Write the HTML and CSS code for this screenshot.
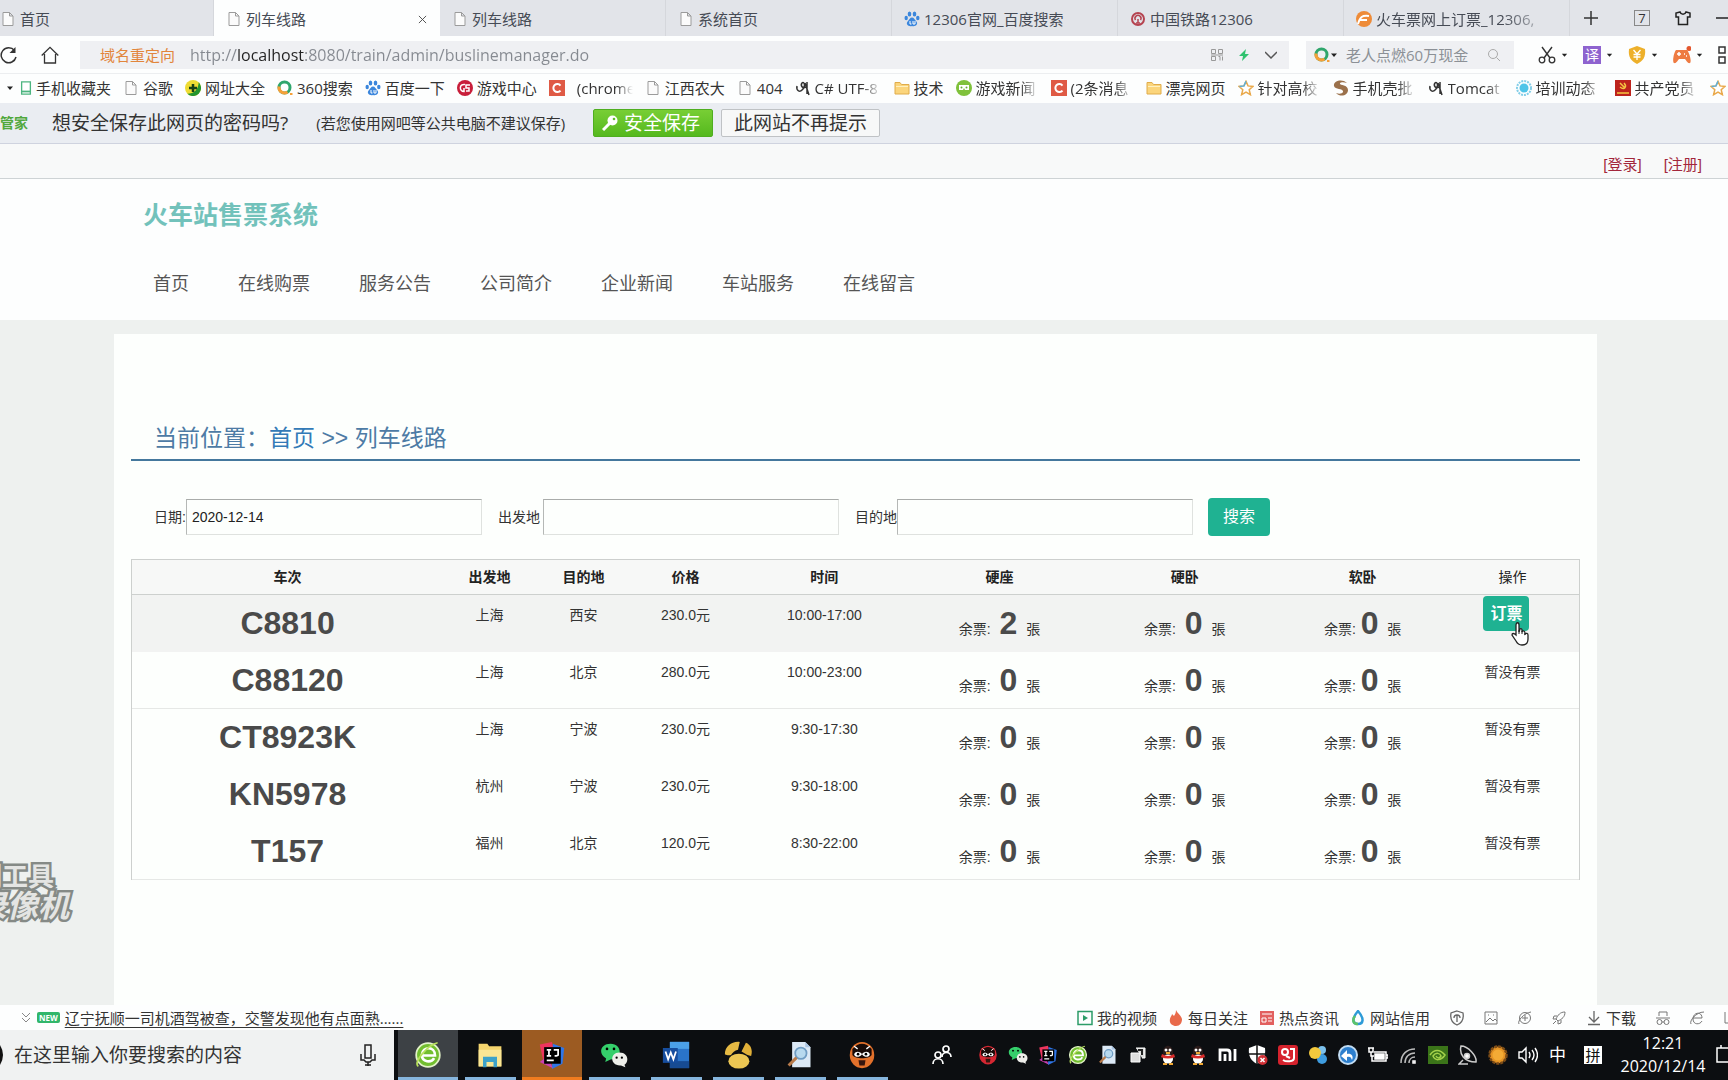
FILE: index.html
```html
<!DOCTYPE html>
<html lang="zh-CN">
<head>
<meta charset="utf-8">
<title>列车线路</title>
<meta name="viewport" content="width=device-width, initial-scale=1">
<link rel="stylesheet" href="styles.css">
</head>
<body>
<svg class="defs" aria-hidden="true">
  <symbol id="doc" viewBox="0 0 16 16"><path d="M3 1.5h6.5L13 5v9.500H3z M9.500 1.500V5H13" fill="#fbfbfb" stroke="#9b9b9b"/></symbol>
  <symbol id="folder" viewBox="0 0 16 16"><path d="M1 2.500h5l1.500 2H15v9.500H1z" fill="#fbd57c" stroke="#e0ac4b"/><path d="M2 6.500h12" stroke="#fff0c0"/></symbol>
  <symbol id="csdn" viewBox="0 0 16 16"><path fill="#df5a45" d="M0 0h16v16H0z"/><path d="M11.500 5.500a4 4 0 1 0 0 5" fill="none" stroke="#fff" stroke-width="2"/></symbol>
  <symbol id="star" viewBox="0 0 16 16"><path d="M8 1.300l2 4.600 5 .5-3.800 3.300 1.200 5L8 12.100l-4.400 2.600 1.200-5L1 6.400l5-.5z" fill="#fff" stroke="#e9a94b" stroke-width="1.500"/><path d="M1.500 6.400l4.500-.5 2-4.600" fill="none" stroke="#5bb0dd" stroke-width="1.500"/></symbol>
  <symbol id="paw" viewBox="0 0 16 16" fill="#3b86dc"><ellipse cx="5.500" cy="3" rx="1.800" ry="2.500"/><ellipse cx="10.500" cy="3" rx="1.800" ry="2.500"/><ellipse cx="2.200" cy="7" rx="1.700" ry="2.200"/><ellipse cx="13.800" cy="7" rx="1.700" ry="2.200"/><path d="M8 6.500c2 0 2.500 2 4 3.500 3 3-.5 6-4 5-3.500 1-7-2-4-5C5.500 8.500 6 6.500 8 6.500z"/><path d="M6 10v3h1.500M9 10v3h2v-3" fill="none" stroke="#fff"/></symbol>
  <symbol id="ring" viewBox="0 0 16 16"><circle cx="7.500" cy="7.500" r="5.500" fill="none" stroke="#2fa66c" stroke-width="3"/><path d="M2.100 6.500a5.500 5.500 0 0 0 8.400 5.600" fill="none" stroke="#f6a038" stroke-width="3"/><path d="M13 13h2.500v2H13z" fill="#f6a038"/></symbol>
  <symbol id="tomcat" viewBox="0 0 16 16"><path d="M2 6c-1 5 3 7 6 3 3-3 1-8-1-6-2 3 1 6 4 4M10 3l4 12M12 2v12" fill="none" stroke="#333" stroke-width="1.500"/></symbol>
  <symbol id="caret" viewBox="0 0 8 8"><path d="M1 2.500h6L4 6z" fill="#222"/></symbol>
  <symbol id="wechat" viewBox="0 0 32 32"><path d="M12 3c14 0 14 18 0 18l-6 3 1-4C-3 14 1 3 12 3z" fill="#35cf6b"/><path d="M22 13c11 0 11 11 6 14l1 3-5-2C11 29 11 13 22 13z" fill="#eeeeea"/><circle cx="8" cy="9" r="1.500"/><circle cx="16" cy="9" r="1.500"/><circle cx="19" cy="19" r="1.300"/><circle cx="25" cy="19" r="1.300"/></symbol>
  <symbol id="ie360" viewBox="0 0 32 32"><circle cx="16" cy="16" r="13.500" fill="#72be2f" stroke="#e3f2c9" stroke-width="2"/><path d="M9 16.500h15c0-11-14-10.500-15-1 0 9.500 11 9.500 14 4" fill="none" stroke="#fff" stroke-width="3"/><path d="M5 29C-2 24 17 4 27 2" fill="none" stroke="#b8e15b" stroke-width="2"/></symbol>
  <symbol id="idea" viewBox="0 0 32 32"><path d="M2 4l14-3 3 14L7 27z" fill="#ed355e"/><path d="M17 3l13 5-2 18-12 6z" fill="#2f76e8"/><path d="M2 24l9-7 6 14z" fill="#ca3fb1"/><path d="M7 7h19v19H7z"/><path d="M10 10h5M12.500 10v7M10 17h5M18 10h5v6q0 1-4 1M10 22h8" stroke="#fff" stroke-width="2" fill="none"/></symbol>
  <symbol id="finder" viewBox="0 0 32 32"><path d="M7 1h15l6 6v23H7z" fill="#dce9f6"/><path d="M22 1v6h6" fill="#a9c4e2"/><circle cx="17" cy="14" r="6.500" fill="#b7d9ef" stroke="#6f9cc3" stroke-width="2"/><path d="M12 19L3 28" stroke="#b87a4b" stroke-width="3.500"/></symbol>
  <symbol id="ocam" viewBox="0 0 32 32"><ellipse cx="16" cy="16" rx="14" ry="15" fill="currentColor"/><path d="M5 9c7-8 15-8 22 0v7c-3 5-19 5-22 0z" fill="#180b08"/><path d="M16 15c-3 4-8 4-9 0 2-4 7-3 9 0 2-3 7-4 9 0-1 4-6 4-9 0" fill="#fff"/><circle cx="11.500" cy="15" r="1.500"/><circle cx="20.500" cy="15" r="1.500"/><path d="M12 22h8l-1 6h-6z" fill="#35150e"/><path d="M7 6l4 3M25 6l-4 3" stroke="#fff" stroke-width="1.500"/></symbol>
  <symbol id="qq" viewBox="0 0 20 20"><path d="M5 9c-1-11 11-11 10 0l3 5-3-1c0 3-1 4-2 5H7c-1-1-2-2-2-5l-3 1z" fill="#2b1b1a"/><ellipse cx="10" cy="14" rx="5" ry="4.500" fill="#fff"/><circle cx="8" cy="5" r="1.500" fill="#fff"/><circle cx="12" cy="5" r="1.500" fill="#fff"/><path d="M4 9q6 4 12 0l1 3q-7 3-14 0z" fill="#d92b2a"/><path d="M5 19h4M11 19h4M8 8h4" stroke="#f1aa35" stroke-width="2"/></symbol>
</svg>

<header class="browser">
  <nav class="tabs" aria-label="标签页">
    <a class="tab" href="#"><svg class="ico"><use href="#doc"/></svg><span>首页</span></a>
    <a class="tab tab-active" href="#"><svg class="ico"><use href="#doc"/></svg><span>列车线路</span><button class="tab-close" type="button" aria-label="关闭"><svg viewBox="0 0 10 10"><path d="M1 1l8 8M9 1L1 9" stroke="#444"/></svg></button></a>
    <a class="tab" href="#"><svg class="ico"><use href="#doc"/></svg><span>列车线路</span></a>
    <a class="tab" href="#"><svg class="ico"><use href="#doc"/></svg><span>系统首页</span></a>
    <a class="tab" href="#"><svg class="ico"><use href="#paw"/></svg><span>12306官网_百度搜索</span></a>
    <a class="tab" href="#"><svg class="ico" viewBox="0 0 16 16"><circle cx="8" cy="8" r="6" fill="none" stroke="#b54350" stroke-width="2"/><path d="M6 12h4M8 12V8M5.500 9a3 3 0 1 1 5 0" fill="none" stroke="#b54350" stroke-width="1.500"/></svg><span>中国铁路12306</span></a>
    <a class="tab" href="#"><svg class="ico" viewBox="0 0 16 16"><circle cx="8" cy="8" r="8" fill="#ee8b38"/><path d="M2 13c2-7 4-9 11-8M4 9h7" fill="none" stroke="#fff" stroke-width="2"/></svg><span class="tail">火车票网上订票_12306,</span></a>
    <div class="window-tools">
      <button type="button" aria-label="新标签"><svg class="ico" viewBox="0 0 16 16"><path d="M8 1v14M1 8h14" stroke="#333" stroke-width="1.500"/></svg></button>
      <button type="button" class="count">7</button>
      <button type="button" aria-label="皮肤"><svg class="ico" viewBox="0 0 16 16"><path d="M5 2L1 3v4h2.500v7.500h9V7H15V3l-4-1c-1 3-5 3-6 0z" fill="none" stroke="#222" stroke-width="1.500"/></svg></button>
      <button type="button" aria-label="最小化"><svg class="ico" viewBox="0 0 16 16"><path d="M0 8h16" stroke="#222" stroke-width="1.500"/></svg></button>
    </div>
  </nav>

  <div class="address-row">
    <button type="button" aria-label="刷新"><svg class="ico-l" viewBox="0 0 18 18"><path d="M14.500 4.500A7.500 7.500 0 1 0 16 11" fill="none" stroke="#333" stroke-width="1.500"/><path d="M15.500 1v6h-6z" fill="#333"/></svg></button>
    <button type="button" aria-label="主页"><svg class="ico-l" viewBox="0 0 18 18"><path d="M.7 9.500L9 1.300l8.300 8.200M3.500 8v9h11V8" fill="none" stroke="#333" stroke-width="1.300"/></svg></button>
    <div class="address">
      <label for="url">域名重定向</label>
      <input id="url" type="text" value="http://localhost:8080/train/admin/buslinemanager.do">
      <svg class="ico-s" viewBox="0 0 12 12"><path d="M.5.500h4v4h-4zM7.500.500h4v4h-4zM.5 7.500h4v4h-4zM7.500 7.500h1.500v4M11.500 7.500v4M0 6h12" fill="none" stroke="#999"/></svg>
      <svg class="ico-s" viewBox="0 0 12 12"><path d="M8 0L1 7h4l-1 5 7-7H7z" fill="#2fc26e"/></svg>
      <svg class="ico-s" viewBox="0 0 12 12"><path d="M0 3l6 6 6-6" fill="none" stroke="#555" stroke-width="1.500"/></svg>
    </div>
    <div class="quick">
      <svg class="ico"><use href="#ring"/></svg><svg class="caret"><use href="#caret"/></svg>
      <input type="search" aria-label="搜索" placeholder="老人点燃60万现金">
      <svg class="ico-s" viewBox="0 0 12 12"><circle cx="5" cy="5" r="4.500" fill="none" stroke="#aaa"/><path d="M8.500 8.500L12 12" stroke="#aaa"/></svg>
    </div>
    <div class="addons">
      <button type="button" aria-label="截图"><svg class="ico-l" viewBox="0 0 18 18"><path d="M4 1l8 11M14 1L6 12" stroke="#333" stroke-width="1.400"/><circle cx="4" cy="14" r="2.800" fill="none" stroke="#333" stroke-width="1.300"/><circle cx="14" cy="14" r="2.800" fill="none" stroke="#333" stroke-width="1.300"/></svg><svg class="caret"><use href="#caret"/></svg></button>
      <button type="button"><span class="translate">译</span><svg class="caret"><use href="#caret"/></svg></button>
      <button type="button" aria-label="钱盾"><svg class="ico-l" viewBox="0 0 18 18"><path d="M9 0l8 3c1 8-2 12-8 15C3 15 0 11 1 3z" fill="#edb02b"/><path d="M5.500 4L9 8l3.500-4M9 8v6M5.500 8.500h7M5.500 11h7" fill="none" stroke="#fff" stroke-width="1.300"/></svg><svg class="caret"><use href="#caret"/></svg></button>
      <button type="button" aria-label="游戏"><svg class="ico-l" viewBox="0 0 18 18"><path d="M3 4h11c2 2 5 11 3 13-2 1-4-3-5-4H6c-1 1-3 5-5 4S1 6 3 4z" fill="#ee7b42"/><circle cx="16" cy="2.500" r="2.500" fill="#e4572e"/><path d="M4 8h4M6 6v4M11 8h1M13 10h1" stroke="#fff" stroke-width="1.500"/></svg><svg class="caret"><use href="#caret"/></svg></button>
      <button type="button" aria-label="更多"><svg class="ico-l" viewBox="0 0 18 18"><path d="M1 1h6v6H1zM11 1h6v6h-6zM1 11h6v6H1zM11 11h6v6h-6z" fill="none" stroke="#333" stroke-width="1.500"/></svg></button>
    </div>
  </div>

  <nav class="bookmarks" aria-label="收藏夹">
    <svg class="caret"><use href="#caret"/></svg>
    <a href="#"><svg class="ico-s" viewBox="0 0 12 16"><path d="M1 1h10v14H1z" fill="#fff" stroke="#4db580" stroke-width="1.500"/><path d="M1 12h10" stroke="#4db580" stroke-width="2"/></svg><span>手机收藏夹</span></a>
    <a href="#"><svg class="ico"><use href="#doc"/></svg><span>谷歌</span></a>
    <a href="#"><svg class="ico" viewBox="0 0 16 16"><circle cx="8" cy="8" r="8" fill="#eedb33"/><path d="M13.700 2.300A8 8 0 0 1 2.300 13.700c7 0 11-4 11.400-11.400z" fill="#23942f"/><path d="M8 4v8M4 8h8" stroke="#173f16" stroke-width="2.500"/></svg><span>网址大全</span></a>
    <a href="#"><svg class="ico"><use href="#ring"/></svg><span>360搜索</span></a>
    <a href="#"><svg class="ico"><use href="#paw"/></svg><span>百度一下</span></a>
    <a href="#"><svg class="ico" viewBox="0 0 16 16"><circle cx="8" cy="8" r="8" fill="#c81e3a"/><path d="M8 4.500c-6-1-6 7-1 7V8M13 5H9v3h3v3H9" fill="none" stroke="#fff" stroke-width="1.500"/></svg><span>游戏中心</span></a>
    <a href="#" class="wide"><svg class="ico"><use href="#csdn"/></svg><span class="fade short">(chrome</span></a>
    <a href="#"><svg class="ico"><use href="#doc"/></svg><span>江西农大</span></a>
    <a href="#"><svg class="ico"><use href="#doc"/></svg><span>404</span></a>
    <a href="#"><svg class="ico"><use href="#tomcat"/></svg><span class="fade long">C# UTF-8</span></a>
    <a href="#"><svg class="ico"><use href="#folder"/></svg><span>技术</span></a>
    <a href="#"><svg class="ico" viewBox="0 0 16 16"><circle cx="8" cy="8" r="8" fill="#7fc13b"/><path d="M3 5h10v5H9l-1-2-1 2H3z" fill="#fff"/><circle cx="5.500" cy="7.500" r="1" fill="#6a3"/><circle cx="10.500" cy="7.500" r="1" fill="#6a3"/></svg><span class="fade">游戏新闻</span></a>
    <a href="#"><svg class="ico"><use href="#csdn"/></svg><span class="fade">(2条消息</span></a>
    <a href="#"><svg class="ico"><use href="#folder"/></svg><span>漂亮网页</span></a>
    <a href="#"><svg class="ico"><use href="#star"/></svg><span class="fade">针对高校</span></a>
    <a href="#"><svg class="ico" viewBox="0 0 16 16"><path d="M14 3C9-2 0 1 1 6c1 4 10 2 9 6-1 2-4 2-7 1 5 5 12 2 12-3 0-6-9-4-8-7 1-1 4-1 7 0z" fill="#9b714b"/></svg><span class="fade">手机壳批</span></a>
    <a href="#"><svg class="ico"><use href="#tomcat"/></svg><span class="fade short">Tomcat</span></a>
    <a href="#"><svg class="ico" viewBox="0 0 16 16"><circle cx="8" cy="8" r="7" fill="none" stroke="#83cee8" stroke-width="2" stroke-dasharray="2 1"/><circle cx="8" cy="8" r="4.500" fill="#4fc4e8"/></svg><span class="fade long">培训动态</span></a>
    <a href="#"><svg class="ico" viewBox="0 0 16 16"><path d="M0 0h16v16H0z" fill="#bd241d"/><path d="M5 7c5 4 7-1 4-4M5 3l5 5M2 13h12" fill="none" stroke="#f5c642" stroke-width="1.500"/></svg><span class="fade">共产党员</span></a>
    <a href="#"><svg class="ico"><use href="#star"/></svg><span>大</span></a>
  </nav>

  <div class="save-bar">
    <strong>管家</strong>
    <span class="ask">想安全保存此网页的密码吗?</span>
    <span class="note">(若您使用网吧等公共电脑不建议保存)</span>
    <button type="button" class="btn-save"><svg class="ico" viewBox="0 0 16 16"><circle cx="10.500" cy="5.500" r="5" fill="#fff"/><path d="M8 8l-7 7" stroke="#fff" stroke-width="3"/><circle cx="12" cy="4" r="1.300" fill="#60bd2a"/></svg>安全保存</button>
    <button type="button" class="btn-never">此网站不再提示</button>
  </div>
</header>

<div class="page">
  <div class="account"><a href="#">[登录]</a><a href="#">[注册]</a></div>
  <div class="site-head">
    <h1>火车站售票系统</h1>
    <nav class="menu"><a href="#">首页</a><a href="#">在线购票</a><a href="#">服务公告</a><a href="#">公司简介</a><a href="#">企业新闻</a><a href="#">车站服务</a><a href="#">在线留言</a></nav>
  </div>

  <main class="card">
    <h2>当前位置：<a href="#">首页</a> &gt;&gt; 列车线路</h2>
    <form class="filter">
      <label for="date">日期:</label><input id="date" type="text" value="2020-12-14">
      <label for="from">出发地</label><input id="from" type="text">
      <label for="to">目的地</label><input id="to" type="text">
      <button type="button" class="btn">搜索</button>
    </form>
    <table class="lines">
      <colgroup><col class="c-no"><col class="c-from"><col class="c-to"><col class="c-price"><col class="c-time"><col class="c-seat"><col class="c-hard"><col class="c-soft"><col class="c-act"></colgroup>
      <thead><tr><th>车次</th><th>出发地</th><th>目的地</th><th>价格</th><th>时间</th><th>硬座</th><th>硬卧</th><th>软卧</th><th class="plain">操作</th></tr></thead>
      <tbody>
        <tr class="hover"><td><b>C8810</b></td><td>上海</td><td>西安</td><td>230.0元</td><td>10:00-17:00</td><td class="left">余票: <b>2</b> 張</td><td class="left">余票: <b>0</b> 張</td><td class="left tight">余票: <b>0</b> 張</td><td class="act"><div class="order"><button type="button" class="btn btn-order">订票</button><svg class="hand" viewBox="0 0 18 24"><path d="M5 13V3c0-3 3-3 3 0v7l1-3c1-1 2 0 2 1v2c1-2 3-1 3 1v1c1-1 3-1 3 1v4c0 4-2 6-6 6-3 0-5-2-6-4l-4-6c0-2 2-2 4 0z" fill="#fff" stroke="#222" stroke-width="1.300"/><path d="M8 8v4M11 9v3M14 11v2" stroke="#222"/></svg></div></td></tr>
        <tr class="ruled"><td><b>C88120</b></td><td>上海</td><td>北京</td><td>280.0元</td><td>10:00-23:00</td><td class="left">余票: <b>0</b> 張</td><td class="left">余票: <b>0</b> 張</td><td class="left tight">余票: <b>0</b> 張</td><td>暂没有票</td></tr>
        <tr><td><b>CT8923K</b></td><td>上海</td><td>宁波</td><td>230.0元</td><td>9:30-17:30</td><td class="left">余票: <b>0</b> 張</td><td class="left">余票: <b>0</b> 張</td><td class="left tight">余票: <b>0</b> 張</td><td>暂没有票</td></tr>
        <tr><td><b>KN5978</b></td><td>杭州</td><td>宁波</td><td>230.0元</td><td>9:30-18:00</td><td class="left">余票: <b>0</b> 張</td><td class="left">余票: <b>0</b> 張</td><td class="left tight">余票: <b>0</b> 張</td><td>暂没有票</td></tr>
        <tr class="ruled"><td><b>T157</b></td><td>福州</td><td>北京</td><td>120.0元</td><td>8:30-22:00</td><td class="left">余票: <b>0</b> 張</td><td class="left">余票: <b>0</b> 張</td><td class="left tight">余票: <b>0</b> 張</td><td>暂没有票</td></tr>
      </tbody>
    </table>
  </main>
  <div class="watermark"><span>制工具</span><span class="big">录像机</span></div>
</div>

<footer>
  <div class="status">
    <svg class="ico-s" viewBox="0 0 12 12"><path d="M2 1l4 4 4-4M2 6l4 4 4-4" fill="none" stroke="#888"/></svg>
    <span class="new">NEW</span>
    <a class="news" href="#">辽宁抚顺一司机酒驾被查，交警发现他有点面熟......</a>
    <div class="links">
      <a href="#"><svg class="ico" viewBox="0 0 16 16"><path d="M1 1.500h14v13H1z" fill="none" stroke="#2c9c68" stroke-width="1.500"/><path d="M6 5v6l5-3z" fill="#2c9c68"/></svg>我的视频</a>
      <a href="#"><svg class="ico" viewBox="0 0 16 16"><path d="M8 0c1 3 5 5 6 9 0 4-2 7-6 7s-7-3-6-7c0-2 2-3 2-5l2 2c1-2 2-3 2-6z" fill="#e96a4b"/></svg>每日关注</a>
      <a href="#"><svg class="ico" viewBox="0 0 16 16"><path d="M1 1h14v14H1z" fill="#e2605f"/><path d="M3 4h10M3 8h4v4H3zM9 8h4M9 11h4" fill="none" stroke="#fff"/></svg>热点资讯</a>
      <a href="#"><svg class="ico" viewBox="0 0 16 16"><path d="M8 1c7 8 5 13 0 13S1 9 8 1z" fill="none" stroke="#2d9bd8" stroke-width="2.500"/><path d="M8 14c-5 0-6-4-3-8" fill="none" stroke="#5cc36a" stroke-width="2.500"/></svg>网站信用</a>
    </div>
    <div class="tools">
      <svg class="ico" viewBox="0 0 16 16"><path d="M8 1l6 2c1 6-1 10-6 12C3 13 1 9 2 3zM8 5v7M5 8c0-4 6-4 6 0" fill="none" stroke="#666" stroke-width="1.300"/></svg>
      <svg class="ico" viewBox="0 0 16 16"><path d="M2 2h12v12H2zM3 12l4-4 3 3 2-2 2 2M5 5h1M10 5h1" fill="none" stroke="#777"/></svg>
      <svg class="ico" viewBox="0 0 16 16"><circle cx="8" cy="8" r="5.500" fill="none" stroke="#777"/><path d="M8 5v6M5 8h6M2 14c-2-3 5-11 12-12" fill="none" stroke="#777"/></svg>
      <svg class="ico" viewBox="0 0 16 16"><path d="M14 2c-5 0-7 3-9 7l2 2c4-2 7-4 7-9zM6 6L3 6l-1 3h3M10 10v3l-3 1v-3M5 11l-3 3" fill="none" stroke="#777"/></svg>
    </div>
    <a class="download" href="#"><svg class="ico" viewBox="0 0 16 16"><path d="M8 1v10M3 7l5 5 5-5M2 14.500h12" fill="none" stroke="#666" stroke-width="1.300"/></svg>下载</a>
    <div class="tools">
      <svg class="ico" viewBox="0 0 16 16"><path d="M4 6V2h8v4M1 8h14M7 12h2" fill="none" stroke="#777"/><circle cx="4.500" cy="12" r="2.500" fill="none" stroke="#777"/><circle cx="11.500" cy="12" r="2.500" fill="none" stroke="#777"/></svg>
      <svg class="ico" viewBox="0 0 16 16"><path d="M4 8h9c0-7-9-6-9 1 0 6 7 6 9 2M2 14C0 11 7 2 15 2" fill="none" stroke="#777"/></svg>
      <svg class="ico" viewBox="0 0 16 16"><path d="M2 2v11h12" fill="none" stroke="#777"/></svg>
    </div>
  </div>

  <div class="taskbar">
    <div class="task-search"><svg viewBox="0 0 4 24"><path d="M0 2q6 10 0 20" fill="#111"/></svg><input type="search" aria-label="搜索" placeholder="在这里输入你要搜索的内容"><svg class="mic" viewBox="0 0 16 22"><path d="M5 1h6v13H5zM1 10v6h3l2 2h4l2-2h3v-6M8 18v4M5 21h6" fill="none" stroke="#222" stroke-width="1.500"/></svg></div>
    <div class="apps">
      <button type="button" class="on" aria-label="浏览器"><svg viewBox="0 0 32 32"><use href="#ie360"/></svg></button>
      <button type="button" aria-label="文件"><svg viewBox="0 0 32 32"><path d="M3 3h10l2 3h14v23H3z" fill="#f5d56e"/><path d="M3 10h26v19H3z" fill="#fbe694"/><path d="M8 18h16v12h-4v-6h-8v6H8z" fill="#3ea2c9"/></svg></button>
      <button type="button" class="hot" aria-label="IDEA"><svg viewBox="0 0 32 32"><use href="#idea"/></svg></button>
      <button type="button" aria-label="微信"><svg viewBox="0 0 32 32"><use href="#wechat"/></svg></button>
      <button type="button" aria-label="Word"><svg viewBox="0 0 32 32"><path d="M9 1h22v30H9z" fill="#2a74c9"/><path d="M9 1h22v8H9z" fill="#4ba0e8"/><path d="M9 23h22v8H9z" fill="#174b93"/><path d="M1 8h17v17H1z" fill="#164d9e"/><path d="M4 12l3 9 3-8 3 8 3-9" fill="none" stroke="#fff" stroke-width="2"/></svg></button>
      <button type="button" aria-label="Navicat"><svg viewBox="0 0 32 32"><ellipse cx="17" cy="23" rx="12" ry="8.500" fill="#ecc653"/><path d="M1 15C1 6 9 0 18 1l-2 9c-4 1-6 3-8 6-3 1-5 0-7-1z" fill="#e6b943"/><path d="M20 12l5-10c6 2 8 9 6 15-3 0-6-2-11-5z" fill="#e0af38"/></svg></button>
      <button type="button" aria-label="查找"><svg viewBox="0 0 32 32"><use href="#finder"/></svg></button>
      <button type="button" class="orange" aria-label="录屏"><svg viewBox="0 0 32 32"><use href="#ocam"/></svg></button>
    </div>
    <div class="people"><svg viewBox="0 0 20 20" fill="none" stroke="#fff" stroke-width="1.700"><circle cx="14" cy="4" r="3"/><path d="M10 12c0-6 9-6 9 0"/><circle cx="6" cy="10" r="3"/><path d="M1 19c0-7 10-7 10 0"/></svg></div>
    <div class="tray">
      <svg class="red" viewBox="0 0 32 32"><use href="#ocam"/></svg>
      <svg><use href="#wechat"/></svg>
      <svg><use href="#idea"/></svg>
      <svg><use href="#ie360"/></svg>
      <svg><use href="#finder"/></svg>
      <svg viewBox="0 0 20 20"><path d="M3 8h9v9H3zM8 3h9v10h-3" fill="#ddd" stroke="#fff"/><path d="M10 5h4v5" fill="none" stroke="#222" stroke-width="2"/></svg>
      <svg><use href="#qq"/></svg>
      <svg><use href="#qq"/></svg>
      <svg viewBox="0 0 20 20"><path d="M2 16V5h7q3 0 3 3v8M7 9v7M17 4v12" fill="none" stroke="#fff" stroke-width="2.800"/></svg>
      <svg viewBox="0 0 20 20"><path d="M9 0l8 3c1 8-2 13-8 16C3 16 0 11 1 3z" fill="#fff"/><path d="M9 0v19M1 9h16" stroke="#111" stroke-width="1.500"/><circle cx="14.500" cy="15" r="5" fill="#d12f35"/><path d="M12.500 13l4 4m0-4l-4 4" stroke="#fff" stroke-width="1.500"/></svg>
      <svg viewBox="0 0 20 20"><rect width="20" height="20" rx="3" fill="#d5222d"/><circle cx="7" cy="7" r="3" fill="none" stroke="#fff" stroke-width="2"/><path d="M12 4h4v9c0 4-8 4-11 2M8 11l4 2" fill="none" stroke="#fff" stroke-width="2"/></svg>
      <svg viewBox="0 0 20 20"><circle cx="14" cy="14" r="5" fill="#3e9ce0"/><circle cx="14" cy="5" r="4" fill="#7cc1ed"/><circle cx="7" cy="8" r="6" fill="#f3c93d"/></svg>
      <svg viewBox="0 0 20 20"><circle cx="10" cy="10" r="9" fill="#2d7fce" stroke="#c2dcf2" stroke-width="2"/><path d="M14 15c2-4-1-7-5-6V5L3 11l6 5v-4c3-1 4 0 5 3z" fill="#fff"/></svg>
      <svg viewBox="0 0 20 20" fill="none" stroke="#fff" stroke-width="1.500"><path d="M6 7h12v9H4v-5M18 10h2v3h-2M1 3v4h4V3M3 7v4h3M0 3h6"/><path d="M7 9h9v5H7z" fill="#fff"/></svg>
      <svg viewBox="0 0 20 20" fill="none" stroke="#bbb" stroke-width="1.500"><path d="M3 18C3 9 9 4 17 4M7 18c0-6 4-10 10-10M11 18c0-3 2-6 6-6"/><path d="M15 16h2v2h-2z" stroke="#fff"/></svg>
      <svg viewBox="0 0 20 20"><path d="M0 1h20v18H0z" fill="#3b7419"/><path d="M2 10c4-6 10-6 15 0-4 6-10 6-12 1 3-4 7-3 8 0-2 3-4 2-5 0" fill="none" stroke="#a5d24b" stroke-width="1.500"/></svg>
      <svg viewBox="0 0 20 20" fill="none" stroke="#ccc" stroke-width="1.500"><path d="M3 1c-2 8 3 16 15 16C19 11 10 1 3 1zM5 15l-4 4h9"/><circle cx="9" cy="11" r="2.500" fill="#fff"/></svg>
      <svg viewBox="0 0 20 20"><circle cx="10" cy="10" r="8.500" fill="#e49324" stroke="#7d4c17" stroke-width="2.500" stroke-dasharray="3 1"/><circle cx="10" cy="10" r="5.500" fill="#f3ab35"/></svg>
      <svg viewBox="0 0 20 20" fill="none" stroke="#fff" stroke-width="1.400"><path d="M1 7h3l4-4v14l-4-4H1zM11 7q2 3 0 6M14 5q4 5 0 10M17 3q5 7 0 14"/></svg>
    </div>
    <span class="ime">中</span>
    <span class="pinyin">拼</span>
    <div class="clock"><span>12:21</span><span>2020/12/14</span></div>
    <svg class="notice" viewBox="0 0 20 20"><path d="M2 3h16v14H2zM6 3V0" fill="none" stroke="#fff" stroke-width="1.500"/></svg>
  </div>
</footer>
</body>
</html>
```
FILE: styles.css
```css
* { box-sizing: border-box; }

body {
  margin: 0;
  min-height: 100vh;
  display: flex;
  flex-direction: column;
  overflow: hidden;
  background: #eef1ef;
  color: #333;
  font: 15px/20px "Open Sans", "Noto Sans CJK SC", sans-serif;
}

a { color: inherit; text-decoration: none; }
button { font: inherit; border: 0; padding: 0; background: none; color: inherit; display: flex; align-items: center; }
input { font: inherit; color: inherit; border: 0; padding: 0; background: none; min-width: 0; outline: 0; }
svg { flex: none; display: block; }
.defs { position: absolute; width: 0; height: 0; }
.ico { width: 16px; height: 16px; }
.ico-s { width: 12px; height: 14px; }
.ico-l { width: 18px; height: 18px; }
.caret { width: 8px; height: 8px; }
.fade, .tail { -webkit-mask-image: linear-gradient(to right, #000 70%, transparent); mask-image: linear-gradient(to right, #000 70%, transparent); }

/* tab strip */
.tabs { display: flex; height: 36px; margin-left: -12px; background: #e2e4e9; overflow: hidden; }
.tab { display: flex; flex: none; align-items: center; gap: 4px; width: 226px; padding: 2px 12px 0; border-right: 1px solid #d5d7dc; color: #464b55; white-space: nowrap; }
.tab span { flex: 1; }
.tab-active { background: #fdfefe; border-color: #fdfefe; }
.tab-close svg { width: 9px; height: 9px; }
.window-tools { display: flex; flex: none; align-items: center; gap: 25px; padding-left: 13px; }
.count { width: 16px; height: 16px; margin-left: 10px; justify-content: center; border: 1px solid #888; font-size: 13px; line-height: 14px; }

/* address bar */
.address-row { display: flex; align-items: center; height: 38px; background: #fdfefe; border-bottom: 1px solid #eceef0; overflow: hidden; }
.address-row > button + button { margin-left: 23px; }
.address { display: flex; flex: 1; align-items: center; gap: 15px; height: 28px; margin-left: 21px; padding: 0 12px 0 20px; background: #eff0f3; }
.address label { color: #e2853b; }
.address input {
  flex: 1;
  font-size: 16px;
  color: transparent;
  background: linear-gradient(to right, #858990 47px, #222 47px, #222 114px, #858990 114px);
  -webkit-background-clip: text;
  background-clip: text;
}
.quick { display: flex; align-items: center; width: 208px; height: 28px; margin: 0 24px 0 17px; padding: 0 14px 0 8px; background: #eff0f3; }
.quick input { flex: 1; margin-left: 8px; }
.quick input::placeholder { color: #8c9096; opacity: 1; }
.addons { display: flex; flex: none; gap: 15px; width: 190px; }
.addons button { gap: 5px; }
.addons .caret { width: 7px; }
.translate { width: 18px; height: 18px; background: #8e63cf; color: #fff; font-size: 14px; line-height: 18px; text-align: center; }

/* bookmarks */
.bookmarks { display: flex; align-items: center; gap: 12px; height: 29px; padding: 0 0 2px 6px; background: #fdfefe; overflow: hidden; }
.bookmarks a { display: flex; flex: none; align-items: center; gap: 4px; }
.bookmarks .caret { margin-right: -6px; }
.bookmarks span { overflow: hidden; white-space: nowrap; }
.bookmarks .fade { width: 63px; }
.bookmarks .long { width: 67px; }
.bookmarks .short { width: 56px; }
.bookmarks .wide { gap: 12px; }

/* password prompt */
.save-bar { display: flex; align-items: center; height: 41px; background: #eaedf2; border-bottom: 1px solid #cfd3df; font-size: 19px; white-space: nowrap; }
.save-bar strong { color: #51a83d; font-size: 14px; }
.ask { margin-left: 24px; }
.note { margin-left: 28px; font-size: 15px; }
.btn-save { gap: 6px; height: 28px; margin-left: 28px; padding: 0 12px 0 8px; border-radius: 2px; border: 1px solid #4fae20; background: linear-gradient(#78ce35, #55b91e); color: #fff; }
.btn-never { height: 28px; margin-left: 8px; padding: 0 12px; border: 1px solid #bfc2c5; border-radius: 2px; background: #f7f8f8; }

/* site */
.page { position: relative; flex: 1; display: flex; flex-direction: column; font-family: "Liberation Sans", "Noto Sans CJK SC", sans-serif; }
.account { display: flex; justify-content: flex-end; gap: 22px; height: 35px; padding: 10px 26px 0 0; background: #f8f9f9; border-bottom: 1px solid #ced3d5; color: #a3263b; font-size: 15px; line-height: 22px; }
.site-head { padding: 20px 143px 0; height: 141px; background: #fdfefe; }
.site-head h1 { margin: 0; color: #72c2bb; font-size: 25px; line-height: 32px; }
.menu { display: flex; gap: 49px; padding: 41px 10px 0; color: #555; font-size: 18px; line-height: 24px; }
.card { flex: 1; margin: 14px 131px 0 114px; padding: 87px 17px 0; background: #fdfffd; }
.card h2 { margin: 0; padding: 0 23px 4px; border-bottom: 2px solid #44789d; color: #4d7ba5; font-size: 23px; font-weight: 400; line-height: 34px; }
.card h2 a { color: #337ab7; }
.filter { display: flex; align-items: center; padding: 37px 0 0 23px; font-size: 14px; }
.filter input { width: 296px; height: 36px; padding: 0 5px; border: 1px solid; border-color: #a9acaa #dfe2df #dfe2df #b5b8b6; color: #222; }
.filter input + label { margin-left: 16px; }
.filter label[for="from"] { margin-right: 3px; }
.btn { justify-content: center; border-radius: 4px; background: #1fb292; color: #fff; font-size: 16px; }
.filter .btn { width: 62px; height: 38px; margin-left: 15px; }

.lines { width: 100%; margin-top: 23px; table-layout: fixed; border-collapse: separate; border-spacing: 0; border: 1px solid #cdd0ce; border-bottom: 0; font-size: 14px; line-height: 20px; text-align: center; }
.c-no { width: 21.5%; }
.c-from { width: 6.4%; }
.c-to { width: 6.6%; }
.c-price { width: 7.5%; }
.c-time { width: 11.7%; }
.c-seat { width: 12.5%; }
.c-hard { width: 13.1%; }
.c-soft { width: 11.5%; }
.c-act { width: 9.2%; }
.lines th { height: 35px; padding: 0; background: #f7f8f7; border-bottom: 1px solid #cdd0ce; font-weight: 700; color: #222; }
.lines .plain { font-weight: 400; }
.lines td { height: 57px; padding: 10px 0 0; vertical-align: top; }
.lines b { font-size: 32px; line-height: 36px; color: #4a4a4a; }
.left { white-space: nowrap; }
.left b { margin: 0 5px; }
.tight b { margin-left: 1px; }
.hover td { background: #f2f3f2; }
.lines .act { padding-top: 1px; }
.ruled td { border-bottom: 1px solid #e6e8e6; }
.order { position: relative; width: 58px; margin: 0 auto; }
.btn-order { width: 46px; height: 35px; font-weight: 700; }
.hand { position: absolute; left: 28px; top: 26px; width: 18px; height: 24px; }

/* recorder overlay */
.watermark { position: absolute; left: -24px; bottom: 82px; color: #e4e5e3; font-size: 26px; line-height: 28px; font-weight: 700; -webkit-text-stroke: 5px #858a86; paint-order: stroke fill; }
.watermark span { display: block; }
.watermark .big { font-size: 31px; line-height: 32px; font-style: italic; }

/* browser status bar */
.status { display: flex; align-items: center; height: 25px; padding-left: 20px; background: #fdfefe; white-space: nowrap; overflow: hidden; }
.status a { display: flex; align-items: center; gap: 4px; }
.new { margin: 0 5px; padding: 0 2px; border-radius: 2px; background: #31b66a; color: #fff; font-size: 8px; font-weight: 700; line-height: 11px; }
.status .news { text-decoration: underline; text-underline-offset: 3px; }
.links { display: flex; gap: 11px; margin-left: auto; }
.tools { display: flex; gap: 18px; margin-left: 19px; }
.download { margin-left: 19px; }
.download + .tools { margin-right: -11px; }

/* taskbar */
.taskbar { display: flex; align-items: center; height: 50px; background: #0c0e11; color: #fff; overflow: hidden; }
.taskbar > * { flex: none; }
.task-search { display: flex; align-items: center; gap: 10px; width: 394px; height: 50px; padding-right: 18px; background: #f0f2f2; color: #333; font-size: 19px; }
.task-search > svg { width: 4px; height: 24px; }
.task-search input { flex: 1; }
.task-search input::placeholder { color: #333; opacity: 1; }
.task-search .mic { width: 16px; height: 22px; }
.apps { display: flex; gap: 2px; margin-left: 4px; }
.apps button { width: 60px; height: 50px; justify-content: center; background: linear-gradient(#86b5dd, #86b5dd) center bottom / 51px 3px no-repeat; }
.apps svg { width: 28px; height: 30px; }
.apps .on { background-color: #3d4145; background-size: 60px 3px; }
.apps .hot { background-color: #9c5b22; background-image: linear-gradient(#f07c1f, #f07c1f); background-size: 60px 3px; }
.orange { color: #e3712b; }
.people { margin-left: 40px; }
.people svg { width: 20px; height: 20px; }
.tray { display: flex; gap: 10px; margin-left: 26px; }
.tray svg { width: 20px; height: 20px; }
.red { color: #d52732; }
.ime { margin-left: 11px; font-size: 17px; }
.pinyin { width: 18px; height: 18px; margin-left: 18px; background: #fff; color: #111; font-size: 15px; line-height: 18px; text-align: center; }
.clock { display: flex; flex-direction: column; align-items: center; width: 88px; margin: 0 8px 0 17px; font-size: 16px; line-height: 23px; }
.notice { width: 20px; height: 20px; }
```
